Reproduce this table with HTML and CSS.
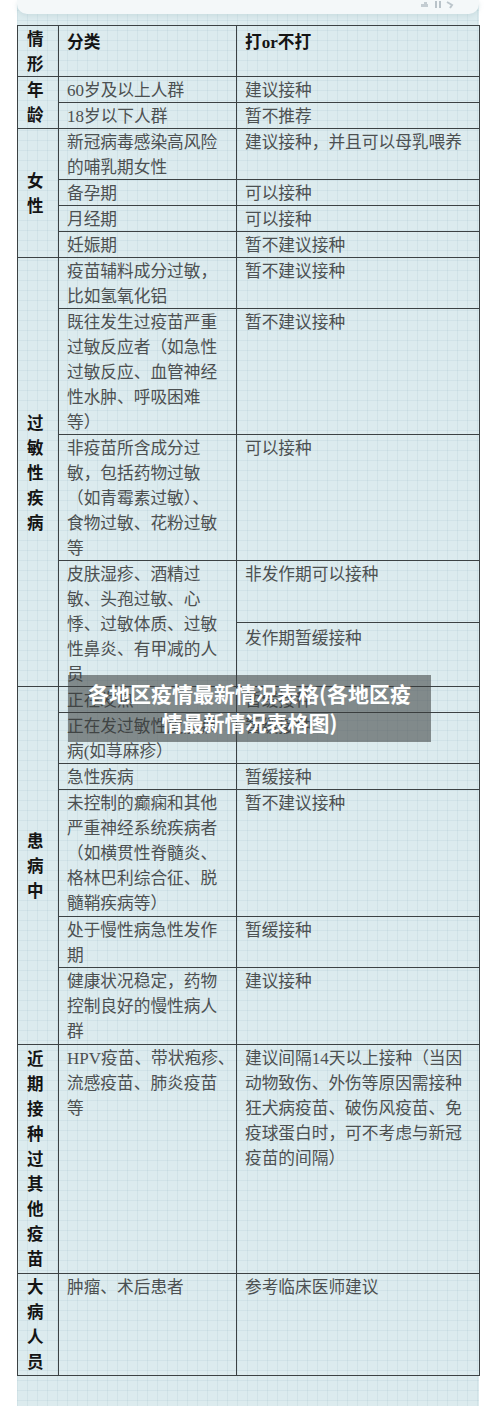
FILE: index.html
```html
<!DOCTYPE html>
<html lang="zh-CN">
<head>
<meta charset="utf-8">
<title>各地区疫情最新情况表格</title>
<link rel="stylesheet" href="styles.css">
</head>
<body>
<div class="page">
  <div class="sheet">
    <div class="topcard">
      <svg class="topicons" width="40" height="10" viewBox="0 0 40 10" aria-hidden="true">
        <rect x="2" y="4" width="7" height="3" fill="#c4cdd2"/>
        <rect x="5" y="2" width="3" height="5" fill="#c4cdd2"/>
        <rect x="16" y="1" width="2" height="7" fill="#b9c3c9"/>
        <rect x="20" y="1" width="2" height="7" fill="#b9c3c9"/>
        <path d="M28 2 L33 5 L31 8" stroke="#bcc6cc" stroke-width="2" fill="none"/>
      </svg>
    </div>
    <table class="grid">
      <colgroup>
        <col class="c1"><col class="c2"><col class="c3">
      </colgroup>
      <tbody>
        <tr class="head">
          <td class="lab">情<br>形</td>
          <td class="hd">分类</td>
          <td class="hd">打<span class="lat">or</span>不打</td>
        </tr>

        <tr>
          <td class="lab" rowspan="2">年<br>龄</td>
          <td><span class="lat">60</span>岁及以上人群</td>
          <td>建议接种</td>
        </tr>
        <tr>
          <td><span class="lat">18</span>岁以下人群</td>
          <td>暂不推荐</td>
        </tr>

        <tr>
          <td class="lab mid" rowspan="4">女<br>性</td>
          <td>新冠病毒感染高风险<br>的哺乳期女性</td>
          <td>建议接种，并且可以母乳喂养</td>
        </tr>
        <tr><td>备孕期</td><td>可以接种</td></tr>
        <tr><td>月经期</td><td>可以接种</td></tr>
        <tr><td>妊娠期</td><td>暂不建议接种</td></tr>

        <tr>
          <td class="lab mid" rowspan="5">过<br>敏<br>性<br>疾<br>病</td>
          <td>疫苗辅料成分过敏，<br>比如氢氧化铝</td>
          <td>暂不建议接种</td>
        </tr>
        <tr>
          <td>既往发生过疫苗严重<br>过敏反应者（如急性<br>过敏反应、血管神经<br>性水肿、呼吸困难<br>等）</td>
          <td>暂不建议接种</td>
        </tr>
        <tr>
          <td>非疫苗所含成分过<br>敏，包括药物过敏<br>（如青霉素过敏）、<br>食物过敏、花粉过敏<br>等</td>
          <td>可以接种</td>
        </tr>
        <tr>
          <td rowspan="2">皮肤湿疹、酒精过<br>敏、头孢过敏、心<br>悸、过敏体质、过敏<br>性鼻炎、有甲减的人<br>员</td>
          <td class="split">非发作期可以接种</td>
        </tr>
        <tr>
          <td class="split split2">发作期暂缓接种</td>
        </tr>

        <tr>
          <td class="lab mid" rowspan="6">患<br>病<br>中</td>
          <td>正在发热</td>
          <td>暂缓接种</td>
        </tr>
        <tr>
          <td>正在发过敏性皮肤疾<br>病<span class="lat">(</span>如荨麻疹）</td>
          <td>暂缓接种</td>
        </tr>
        <tr><td>急性疾病</td><td>暂缓接种</td></tr>
        <tr>
          <td class="pb">未控制的癫痫和其他<br>严重神经系统疾病者<br>（如横贯性脊髓炎、<br>格林巴利综合征、脱<br>髓鞘疾病等）</td>
          <td>暂不建议接种</td>
        </tr>
        <tr>
          <td>处于慢性病急性发作<br>期</td>
          <td>暂缓接种</td>
        </tr>
        <tr>
          <td class="pb">健康状况稳定，药物<br>控制良好的慢性病人<br>群</td>
          <td>建议接种</td>
        </tr>

        <tr>
          <td class="lab pb3">近<br>期<br>接<br>种<br>过<br>其<br>他<br>疫<br>苗</td>
          <td><span class="lat">HPV</span>疫苗、带状疱疹、<br>流感疫苗、肺炎疫苗<br>等</td>
          <td>建议间隔<span class="lat">14</span>天以上接种（当因<br>动物致伤、外伤等原因需接种<br>狂犬病疫苗、破伤风疫苗、免<br>疫球蛋白时，可不考虑与新冠<br>疫苗的间隔）</td>
        </tr>

        <tr>
          <td class="lab pb">大<br>病<br>人<br>员</td>
          <td>肿瘤、术后患者</td>
          <td>参考临床医师建议</td>
        </tr>
      </tbody>
    </table>
  </div>
  <div class="banner">各地区疫情最新情况表格(各地区疫<br>情最新情况表格图)</div>
</div>
</body>
</html>
```

FILE: styles.css
```css
html, body {
  margin: 0;
  padding: 0;
  background: #ffffff;
}

.page {
  position: relative;
  width: 500px;
  height: 1418px;
  overflow: hidden;
}

.sheet {
  margin-left: 17px;
  width: 462px;
  padding-bottom: 30px;
  background-color: #dcebee;
  background-image:
    linear-gradient(rgba(150, 185, 195, 0.16) 1px, transparent 1px),
    linear-gradient(90deg, rgba(150, 185, 195, 0.16) 1px, transparent 1px);
  background-size: 10px 10px;
}

.topcard {
  height: 14px;
  margin-bottom: 11px;
  background: #f4f8f9;
  border-radius: 0 0 10px 10px;
  box-shadow: 0 2px 4px rgba(170, 195, 200, 0.35);
  display: flex;
  justify-content: flex-end;
  align-items: flex-start;
  padding-right: 20px;
}

.topicons {
  display: block;
}

.grid {
  width: 462px;
  table-layout: fixed;
  border-collapse: collapse;
  border: 1px solid #3c4244;
}

.c1 { width: 41px; }
.c2 { width: 178px; }
.c3 { width: 243px; }

.grid td {
  border: 1px solid #3c4244;
  padding: 0 4px 0 8px;
  vertical-align: top;
  font-family: "Noto Sans CJK SC", sans-serif;
  font-size: 16.7px;
  line-height: 25px;
  color: #4c5051;
  white-space: nowrap;
}

.lat {
  font-family: "Liberation Serif", serif;
  font-size: 17px;
  line-height: 1;
}

.grid td.lab {
  font-weight: 700;
  color: #141414;
  font-size: 16.5px;
  padding-left: 9px;
}

.grid td.mid {
  vertical-align: middle;
}

.grid td.hd {
  font-weight: 700;
  color: #141414;
  padding-top: 3px;
}

.grid td.split {
  height: 61px;
}

.grid td.split2 {
  padding-top: 2px;
}

.grid td.pb {
  padding-bottom: 1px;
}

.grid td.pb3 {
  padding-top: 1px;
  padding-bottom: 2px;
}

.banner {
  position: absolute;
  left: 68px;
  top: 675px;
  width: 363px;
  height: 67px;
  box-sizing: border-box;
  padding: 4px 10px 0;
  background: rgba(55, 58, 58, 0.55);
  color: #ffffff;
  font-family: "Noto Sans CJK SC", sans-serif;
  font-weight: 700;
  font-size: 21px;
  line-height: 29px;
  text-align: center;
}
```
